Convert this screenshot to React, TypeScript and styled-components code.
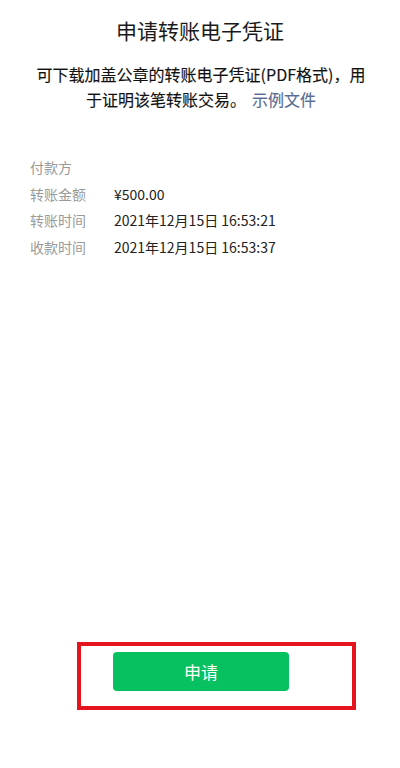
import React from 'react'
import styled, { createGlobalStyle } from 'styled-components'

const GlobalStyle = createGlobalStyle`
  html, body {
    margin: 0;
    padding: 0;
    background: #ffffff;
  }
  body {
    font-family: "Noto Sans CJK SC", "Noto Sans", sans-serif;
    color: #1a1a1a;
  }
`

const rows = [
  { label: '付款方', value: '' },
  { label: '转账金额', value: '¥500.00' },
  { label: '转账时间', value: '2021年12月15日 16:53:21' },
  { label: '收款时间', value: '2021年12月15日 16:53:37' },
]

export default function App() {
  return (
    <>
      <GlobalStyle />
      <Page>
        <Title>申请转账电子凭证</Title>
        <Description>
          可下载加盖公章的转账电子凭证(PDF格式)，用于证明该笔转账交易。<SampleLink>示例文件</SampleLink>
        </Description>
        <InfoList>
          {rows.map(row => (
            <InfoRow key={row.label}>
              <Label>{row.label}</Label>
              <Value>{row.value}</Value>
            </InfoRow>
          ))}
        </InfoList>
        <Footer>
          <Highlight>
            <ApplyButton type="button">申请</ApplyButton>
          </Highlight>
        </Footer>
      </Page>
    </>
  )
}

const Page = styled.main`
  display: flex;
  flex-direction: column;
  min-height: 100vh;
  box-sizing: border-box;
`

const Title = styled.h1`
  margin: 15px 0 0;
  font-size: 21px;
  font-weight: 400;
  line-height: 30px;
  text-align: center;
  color: #1a1a1a;
`

const Description = styled.p`
  margin: 17px 0 0;
  padding: 0 31px 0 33px;
  font-size: 16px;
  font-weight: 400;
  line-height: 25px;
  text-align: center;
  color: #111111;
  -webkit-text-stroke: 0.15px #111111;
`

const SampleLink = styled.a`
  padding-left: 6px;
  color: #576b95;
  -webkit-text-stroke: 0.15px #576b95;
  cursor: pointer;
`

const InfoList = styled.section`
  margin-top: 42px;
  padding-left: 30px;
`

const InfoRow = styled.div`
  display: flex;
  align-items: center;
  height: 26.5px;
  font-size: 14px;
`

const Label = styled.span`
  width: 84px;
  flex: 0 0 auto;
  color: #9a9a9a;
`

const Value = styled.span`
  color: #222222;
`

const Footer = styled.footer`
  margin-top: auto;
  margin-bottom: 58px;
  padding-left: 77px;
`

const Highlight = styled.div`
  width: 279px;
  height: 68px;
  box-sizing: border-box;
  border: 4px solid #e5131d;
  padding: 6px 0 0 32px;
`

const ApplyButton = styled.button`
  display: block;
  width: 176px;
  height: 39px;
  border: none;
  border-radius: 4px;
  background: #07c160;
  color: #ffffff;
  font-family: "Noto Sans CJK SC", "Noto Sans", sans-serif;
  font-size: 17px;
  font-weight: 400;
  cursor: pointer;
`
